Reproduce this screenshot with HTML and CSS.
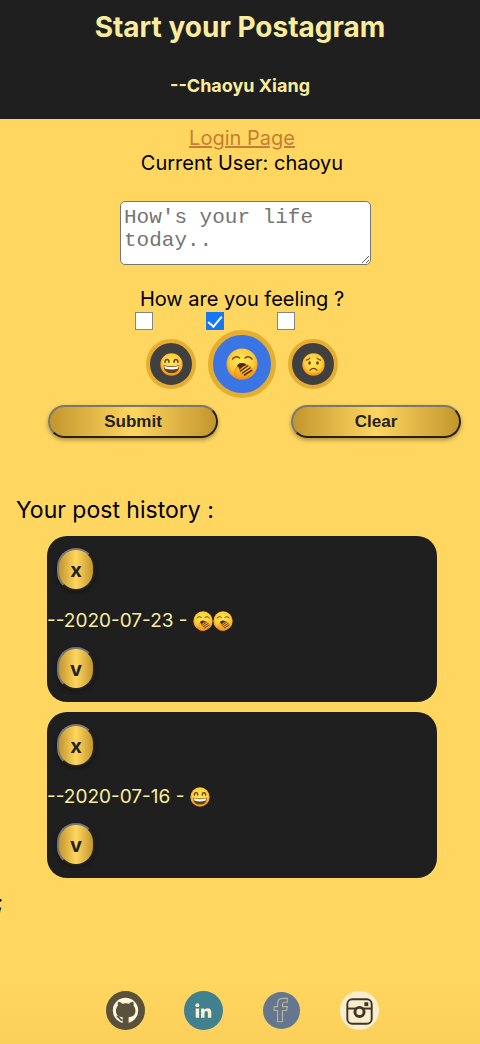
FILE: index.html
```html
<!DOCTYPE html>
<html lang="en">
<head>
<meta charset="utf-8">
<meta name="viewport" content="width=device-width, initial-scale=1">
<title>Postagram</title>
<link rel="stylesheet" href="styles.css">
</head>
<body>
<svg class="defs" aria-hidden="true">
  <defs>
    <radialGradient id="skin" cx="50%" cy="42%" r="58%">
      <stop offset="0" stop-color="#ffe85a"/><stop offset="0.65" stop-color="#ffcf38"/><stop offset="1" stop-color="#ef8d1c"/>
    </radialGradient>
    <linearGradient id="hand" x1="0" y1="0" x2="0" y2="1">
      <stop offset="0" stop-color="#ffc936"/><stop offset="1" stop-color="#ee9420"/>
    </linearGradient>
    <symbol id="smile" viewBox="0 0 32 32">
      <circle cx="16" cy="16" r="15.5" fill="url(#skin)"/>
      <path d="M7 13q0-4 2.800-4t2.700 4M19.500 13q0-4 2.700-4t2.800 4" fill="none" stroke="#633b16" stroke-width="2" stroke-linecap="round"/>
      <path d="M5 17q11 3 22 0q0 11-11 11T5 17z" fill="#67401b"/>
      <path d="M6 18q10 3 20 0q0 3-1.500 4q-8.500 2-17 0Q6 21 6 18z" fill="#fff"/>
    </symbol>
    <symbol id="yawn" viewBox="0 0 32 32">
      <circle cx="16" cy="16" r="15.500" fill="url(#skin)"/>
      <path d="M6.500 11q3-4 7-1M19 10q4-3 7 1" fill="none" stroke="#704417" stroke-width="1.500" stroke-linecap="round"/>
      <path d="M11 19q0-4 5-4t5 4l-4 4h-6z" fill="#4c2711"/>
      <path d="M9.500 30q-2-5 0-9q1-3 3-2l1 3q3-4 8-5q2 0 1 1.500q3-.5 2 1.500q3 0 1.500 2q2 1 0 3q-3 4-7 6q-5 1.500-9.500-1z" fill="url(#hand)" stroke="#d97a16" stroke-width=".6"/>
      <path d="M14.500 23l7-5M16.500 25l7.500-5M18.500 27l7-4.500" fill="none" stroke="#54300f" stroke-width="1.500" stroke-linecap="round"/>
    </symbol>
    <symbol id="worried" viewBox="0 0 32 32">
      <circle cx="16" cy="16" r="15.500" fill="url(#skin)"/>
      <ellipse cx="10.500" cy="14" rx="1.800" ry="2.500" fill="#623a16"/>
      <ellipse cx="21.500" cy="14" rx="1.800" ry="2.500" fill="#623a16"/>
      <path d="M6 10q3-.5 5-3M26 10q-3-.5-5-3M11 24q5-5 10 0" fill="none" stroke="#704417" stroke-width="1.600" stroke-linecap="round"/>
    </symbol>
  </defs>
</svg>

<header class="header">
  <h1 class="title">Start your Postagram</h1>
  <p class="author">--Chaoyu Xiang</p>
</header>

<main class="main">
  <form class="form">
    <a class="login" href="#">Login Page</a>
    <p class="line">Current User: chaoyu</p>
    <textarea class="message" aria-label="Message" placeholder="How's your life today.."></textarea>
    <p class="line">How are you feeling ?</p>
    <div class="checks">
      <input class="check" type="checkbox" id="happy">
      <input class="check" type="checkbox" id="tired" checked>
      <input class="check" type="checkbox" id="sad">
    </div>
    <div class="moods">
      <label class="mood" for="happy" aria-label="Happy"><svg class="face"><use href="#smile"/></svg></label>
      <label class="mood mood-selected" for="tired" aria-label="Tired"><svg class="face"><use href="#yawn"/></svg></label>
      <label class="mood" for="sad" aria-label="Sad"><svg class="face"><use href="#worried"/></svg></label>
    </div>
    <div class="actions">
      <button class="button" type="button">Submit</button>
      <button class="button" type="reset">Clear</button>
    </div>
  </form>

  <section class="history">
    <h2 class="heading">Your post history :</h2>
    <div class="posts">
      <article class="post">
        <button class="button small" type="button">x</button>
        <p class="entry">--2020-07-23 - <svg class="emoji"><use href="#yawn"/></svg><svg class="emoji"><use href="#yawn"/></svg></p>
        <button class="button small" type="button">v</button>
      </article>
      <article class="post">
        <button class="button small" type="button">x</button>
        <p class="entry">--2020-07-16 - <svg class="emoji"><use href="#smile"/></svg></p>
        <button class="button small" type="button">v</button>
      </article>
    </div>
    <p class="stray">;</p>
  </section>
</main>

<footer class="footer">
  <a class="social" href="#" aria-label="GitHub"><svg class="logo" viewBox="0 0 40 40">
    <circle cx="20" cy="20" r="20" fill="#595139"/><circle cx="20" cy="20" r="13" fill="#fff6dc"/>
    <path d="M17 34v-7c-5-.5-7-3-7-7 0-2 .7-3.500 2-5-.4-1.300-.2-2.700.3-4 1.700 0 3 .8 4.300 2q3.400-.8 6.800 0c1.300-1.200 2.600-2 4.300-2 .5 1.300.7 2.700.3 4 1.300 1.500 2 3 2 5 0 4-2 6.500-7 7v7z" transform="translate(.2 0)" fill="#595139"/>
    <path d="M11 26q2 0 3 2t3 2" fill="none" stroke="#595139" stroke-width="1.800"/></svg></a>
  <a class="social" href="#" aria-label="LinkedIn"><svg class="logo" viewBox="0 0 40 40">
    <circle cx="20" cy="20" r="20" fill="#40808f"/><circle cx="13.700" cy="14.500" r="2" fill="#f8f0d0"/>
    <path d="M12 18h3.500v9.500H12zM17.500 18h3.300v1.300q1.200-1.600 3.400-1.600 3.800 0 3.800 4.300v5.500h-3.500v-5q0-2.100-1.600-2.100-1.900 0-1.900 2.300v4.800h-3.500z" fill="#f8f0d0"/></svg></a>
  <a class="social" href="#" aria-label="Facebook"><svg class="logo" viewBox="0 0 40 40">
    <circle cx="20" cy="20" r="19" fill="#65778f"/>
    <path d="M16 31.500V20h-3.500v-4H16v-3q0-5.500 5.500-5.500H26v4h-3q-2 0-2 2V16h5l-.7 4H21v11.500z" fill="none" stroke="#b5b3a0" stroke-width="1.200"/></svg></a>
  <a class="social" href="#" aria-label="Instagram"><svg class="logo" viewBox="0 0 40 40">
    <circle cx="20" cy="20" r="20" fill="#f8edce"/>
    <rect x="7.500" y="8.500" width="25" height="25" rx="5" fill="none" stroke="#403622" stroke-width="2"/>
    <path d="M8 18h24" stroke="#403622" stroke-width="2"/>
    <circle cx="20" cy="21.500" r="4.700" fill="#f8edce" stroke="#403622" stroke-width="3"/>
    <rect x="25" y="11.500" width="4" height="4" fill="#403622"/></svg></a>
</footer>
</body>
</html>
```

FILE: styles.css
```css
* { box-sizing: border-box; }

body {
  margin: 0;
  min-height: 100vh;
  display: flex;
  flex-direction: column;
  overflow-x: hidden;
  background: #ffd65f;
  color: #000;
  font: 20px/24px Inter, "Noto Sans", sans-serif;
}

h1, h2, p { margin: 0; }

.defs { position: absolute; width: 0; height: 0; }

.header {
  padding: 8px 0 21px;
  display: flex;
  flex-direction: column;
  align-items: center;
  gap: 28px;
  background: #1f1f1f;
  color: #f9ed9d;
  text-align: center;
}

.title { font-size: 28px; line-height: 38px; font-weight: 700; }
.author { font-size: 18px; font-weight: 700; }

.main { flex: 1; }

.form {
  padding: 7px 0 0 4px;
  display: flex;
  flex-direction: column;
  align-items: center;
}

.login { color: #c77d32; margin-bottom: 1px; }

.message {
  width: 251px;
  height: 64px;
  margin: 26px 0 22px 7px;
  padding: 4px 3px;
  border: 1px solid #767676;
  border-radius: 5px;
  background: #fff;
  font: 21px/23px "Liberation Mono", monospace;
  overflow: hidden;
  resize: both;
}

.message::placeholder { color: #757575; }

.checks {
  display: flex;
  gap: 53px;
  margin: 1px 54px 0 0;
}

.check {
  appearance: none;
  width: 18px;
  height: 18px;
  margin: 0;
  border: 1px solid #858585;
  background: #fff;
}

.check:checked {
  border-color: #1677f5;
  background: #1677f5;
  display: grid;
  place-items: center;
}

.check:checked::before {
  content: "";
  width: 6px;
  height: 12px;
  margin-bottom: 3px;
  border: solid #fff;
  border-width: 0 2px 2px 0;
  transform: rotate(40deg);
}

.moods { display: flex; align-items: center; gap: 12px; }

.mood {
  width: 50px;
  height: 50px;
  display: grid;
  place-items: center;
  border: 4px solid #e6ae31;
  border-radius: 50%;
  background: #404040;
}

.mood-selected {
  width: 68px;
  height: 68px;
  border-width: 5px;
  background: #3b75e3;
}

.face { width: 23px; height: 23px; }
.mood-selected .face { width: 32px; height: 32px; }

.actions {
  align-self: stretch;
  display: flex;
  justify-content: space-between;
  padding: 7px 19px 0 44px;
}

.button {
  width: 170px;
  height: 33px;
  padding: 0;
  border: 2px solid;
  border-color: #777 #222 #222 #777;
  border-radius: 20px;
  background: linear-gradient(90deg, #c3962d, #ffd65f 50%, #c3962d);
  box-shadow: 0 2px 4px #0005;
  color: #222;
  font: bold 17px/20px "Liberation Sans", Arial, sans-serif;
}

.history { padding-top: 56px; }

.heading {
  padding-left: 16px;
  font-size: 23px;
  line-height: 32px;
  font-weight: 400;
}

.posts {
  margin: 10px 43px 0 47px;
  display: grid;
  gap: 10px;
}

.post {
  padding: 12px 0;
  border-radius: 20px;
  background: #1f1f1f;
  color: #f9ed9d;
}

.small {
  display: block;
  width: 38px;
  height: 43px;
  margin-left: 10px;
  font: bold 20px/24px Inter, sans-serif;
}

.entry {
  display: flex;
  align-items: center;
  margin: 18px 0 14px;
  font-size: 19px;
  white-space: pre;
}

.emoji { width: 20px; height: 20px; }

.stray { margin: 12px 0 0 -3px; }

.footer {
  display: flex;
  justify-content: center;
  gap: 39px;
  padding: 14px 0 14px 4px;
  background: linear-gradient(#ffd65f, #fbd05a);
}

.social { width: 39px; height: 39px; }
.logo { display: block; width: 100%; height: 100%; }
```
